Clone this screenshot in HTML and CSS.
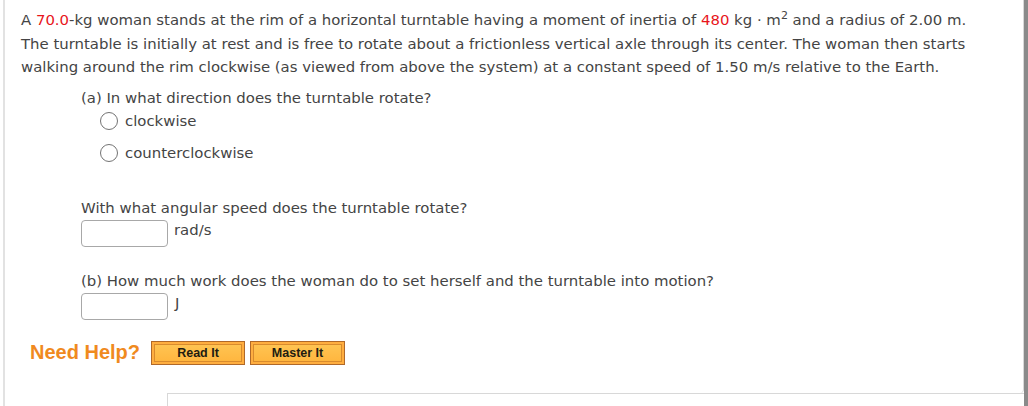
FILE: index.html
```html
<!DOCTYPE html>
<html>
<head>
<meta charset="utf-8">
<link rel="stylesheet" href="styles.css">
</head>
<body>
<div class="page">
  <div class="main">
    <div class="panel">
      <p class="stem">A <span class="red">70.0</span>-kg woman stands at the rim of a horizontal turntable having a moment of inertia of <span class="red">480</span> kg · m<sup>2</sup> and a radius of 2.00 m. The turntable is initially at rest and is free to rotate about a frictionless vertical axle through its center. The woman then starts walking around the rim clockwise (as viewed from above the system) at a constant speed of 1.50 m/s relative to the Earth.</p>
      <div class="part">
        <div class="q">(a) In what direction does the turntable rotate?</div>
        <div class="options">
          <label class="opt"><span class="radio"></span>clockwise</label>
          <label class="opt"><span class="radio"></span>counterclockwise</label>
        </div>
        <div class="q q-speed">With what angular speed does the turntable rotate?</div>
        <div class="answer"><span class="box"></span><span class="unit">rad/s</span></div>
        <div class="q q-b">(b) How much work does the woman do to set herself and the turntable into motion?</div>
        <div class="answer"><span class="box"></span><span class="unit unit-j">J</span></div>
      </div>
      <div class="help">
        <span class="need">Need Help?</span>
        <span class="btn btn-read">Read It</span>
        <span class="btn btn-master">Master It</span>
      </div>
    </div>
    <div class="footer"><div class="footbox"></div></div>
  </div>
  <div class="scroll"></div>
</div>
</body>
</html>
```
FILE: styles.css
```css
html, body {
  margin: 0;
  padding: 0;
  background: #fff;
}
.page {
  display: flex;
  width: 1028px;
  height: 406px;
  overflow: hidden;
}
.main {
  width: 1021px;
  margin-left: 3px;
  border-left: 2px solid #e2e2e2;
  display: flex;
  flex-direction: column;
}
.panel {
  height: 393px;
  box-sizing: border-box;
  border-right: 1px solid #d8d8d8;
  border-bottom-right-radius: 4px;
  padding: 9px 0 0 16px;
  font-family: Verdana, "DejaVu Sans", sans-serif;
  font-size: 14.9px;
  color: #444;
}
.stem {
  margin: 0;
  line-height: 23.5px;
  width: 962px;
}
.stem sup {
  font-size: 11px;
  line-height: 0;
  vertical-align: 6px;
}
.red { color: #e8151b; }
.part {
  margin-left: 60px;
  margin-top: 7px;
}
.q {
  line-height: 23px;
}
.options {
  margin-left: 19px;
  display: flex;
  flex-direction: column;
  gap: 9px;
}
.opt {
  display: flex;
  align-items: center;
  height: 23px;
  gap: 7px;
}
.radio {
  width: 16px;
  height: 16px;
  border: 1.3px solid #737373;
  border-radius: 50%;
  display: inline-block;
}
.q-speed { margin-top: 32px; }
.q-b { margin-top: 23px; }
.answer {
  display: flex;
  align-items: flex-start;
  margin-top: 0;
  gap: 6px;
}
.box {
  width: 85px;
  height: 25px;
  border: 1px solid #a8a8a8;
  border-radius: 4px;
  display: inline-block;
}
.unit {
  line-height: 20px;
}
.unit-j { margin-left: 1px; }
.help {
  display: flex;
  align-items: center;
  margin-top: 21px;
  margin-left: 9px;
  font-family: Arial, "Liberation Sans", sans-serif;
}
.need {
  font-size: 20px;
  font-weight: bold;
  color: #f08a1e;
  margin-right: 11px;
}
.btn {
  display: inline-flex;
  align-items: center;
  justify-content: center;
  box-sizing: border-box;
  height: 24px;
  border: 1px solid #b0692a;
  box-shadow: inset 0 0 0 2px #ffae40, inset 0 0 0 3px #d98b2d;
  background: linear-gradient(#ffc655, #ffb43c);
  font-size: 12.5px;
  font-weight: bold;
  color: #221c12;
}
.btn-read { width: 94px; margin-right: 5px; }
.btn-master { width: 95px; }
.footer {
  flex: 1;
  padding-left: 162px;
}
.footbox {
  height: 100%;
  border-left: 1px solid #d8d8d8;
  border-top: 1px solid #d8d8d8;
  box-sizing: border-box;
}
.scroll {
  width: 4px;
  background: #8a8a8a;
}
```
